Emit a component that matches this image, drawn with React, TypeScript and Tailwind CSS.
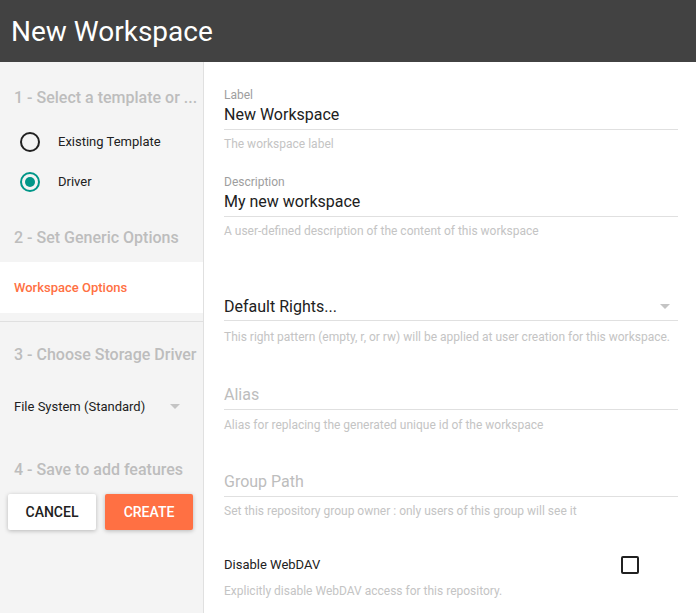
import React from "react";

const font = { fontFamily: "Roboto, 'Noto Sans', sans-serif" };

function Arrow({ className = "" }: { className?: string }) {
  return (
    <svg width="10" height="5" viewBox="0 0 10 5" className={className}>
      <path d="M0 0 L10 0 L5 5 Z" fill="#c4c4c4" />
    </svg>
  );
}

function Step({ text, className = "" }: { text: string; className?: string }) {
  return (
    <div className={"h-[20px] pl-[14px] text-[16px] leading-[20px] font-medium text-[#bdbdbd] whitespace-nowrap " + className}>
      {text}
    </div>
  );
}

function Helper({ text, className = "" }: { text: string; className?: string }) {
  return <div className={"h-[16px] text-[12px] leading-[16px] text-[#c4c4c4] whitespace-nowrap " + className}>{text}</div>;
}

export default function App() {
  return (
    <div className="w-[696px] h-[613px] flex flex-col overflow-hidden bg-white" style={font}>
      <div className="h-[62px] bg-[#424242] flex items-center pl-[11px] shrink-0">
        <span className="text-white text-[28px] leading-none pt-[1px]">New Workspace</span>
      </div>
      <div className="flex flex-1 min-h-0">
        {/* Sidebar */}
        <div className="w-[204px] shrink-0 bg-[#f4f4f4] border-r border-[#e0e0e0] flex flex-col">
          <Step text="1 - Select a template or ..." className="mt-[26px]" />
          <div className="mt-[14px] h-[40px] flex items-center pl-[20px]">
            <div className="w-[20px] h-[20px] rounded-full border-2 border-[#212121]" />
            <span className="ml-[18px] text-[13px] text-[#212121]">Existing Template</span>
          </div>
          <div className="h-[40px] flex items-center pl-[20px]">
            <div className="w-[20px] h-[20px] rounded-full border-2 border-[#009688] flex items-center justify-center">
              <div className="w-[10px] h-[10px] rounded-full bg-[#009688]" />
            </div>
            <span className="ml-[18px] text-[13px] text-[#212121]">Driver</span>
          </div>
          <Step text="2 - Set Generic Options" className="mt-[26px]" />
          <div className="mt-[14px] h-[51px] bg-white flex items-center pl-[14px]">
            <span className="text-[13px] font-medium text-[#ff7043] pt-[1px]">Workspace Options</span>
          </div>
          <div className="mt-[8px] h-px bg-[#e0e0e0]" />
          <Step text="3 - Choose Storage Driver" className="mt-[23px]" />
          <div className="mt-[21px] h-[40px] flex items-center pl-[14px] pt-[1px]">
            <span className="text-[13px] text-[#212121] w-[156px]">File System (Standard)</span>
            <Arrow />
          </div>
          <Step text="4 - Save to add features" className="mt-[34px]" />
          <div className="mt-[14px] flex pl-[8px] gap-[9px]">
            <button className="w-[88px] h-[36px] bg-white rounded-[2px] text-[14px] font-medium text-[#212121] shadow-[0_1px_4px_rgba(0,0,0,0.25)]">
              CANCEL
            </button>
            <button className="w-[88px] h-[36px] bg-[#ff7043] rounded-[2px] text-[14px] font-medium text-white shadow-[0_1px_4px_rgba(0,0,0,0.25)]">
              CREATE
            </button>
          </div>
        </div>
        {/* Form */}
        <div className="flex-1 pl-[20px] pr-[18px] flex flex-col">
          <div className="mt-[25px] h-[16px] text-[12px] leading-[16px] text-[#9e9e9e]">Label</div>
          <div className="h-[27px] border-b border-[#e0e0e0] text-[16px] leading-[24px] text-[#212121]">New Workspace</div>
          <Helper text="The workspace label" className="mt-[6px]" />

          <div className="mt-[22px] h-[16px] text-[12px] leading-[16px] text-[#9e9e9e]">Description</div>
          <div className="h-[27px] border-b border-[#e0e0e0] text-[16px] leading-[24px] text-[#212121]">My new workspace</div>
          <Helper text="A user-defined description of the content of this workspace" className="mt-[6px]" />

          <div className="mt-[55px] h-[27px] border-b border-[#e0e0e0] flex justify-between pt-[1px]">
            <span className="text-[16px] leading-[24px] text-[#212121]">Default Rights...</span>
            <Arrow className="mt-[9px] mr-[8px]" />
          </div>
          <Helper text="This right pattern (empty, r, or rw) will be applied at user creation for this workspace." className="mt-[8px]" />

          <div className="mt-[37px] h-[28px] border-b border-[#e0e0e0] text-[16px] leading-[24px] text-[#bdbdbd] pt-[1px]">Alias</div>
          <Helper text="Alias for replacing the generated unique id of the workspace" className="mt-[7px]" />

          <div className="mt-[36px] h-[28px] border-b border-[#e0e0e0] text-[16px] leading-[24px] text-[#bdbdbd] pt-[1px]">Group Path</div>
          <Helper text="Set this repository group owner : only users of this group will see it" className="mt-[6px]" />

          <div className="mt-[33px] h-[24px] flex items-center justify-between pr-[39px] pt-[1px]">
            <span className="text-[13px] text-[#212121]">Disable WebDAV</span>
            <div className="w-[18px] h-[18px] border-2 border-[#212121] rounded-[2px]" />
          </div>
          <Helper text="Explicitly disable WebDAV access for this repository." className="mt-[7px]" />
        </div>
      </div>
    </div>
  );
}
